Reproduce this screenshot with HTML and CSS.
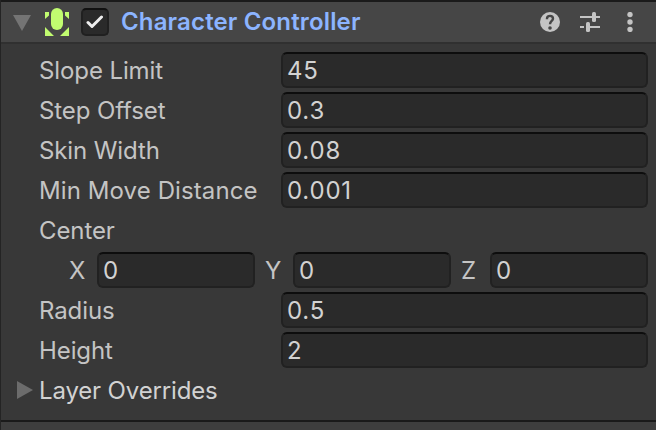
FILE: index.html
```html
<!DOCTYPE html>
<html lang="en">
<head>
<meta charset="utf-8">
<title>Character Controller</title>
<link rel="stylesheet" href="styles.css">
</head>
<body>
<main class="inspector">
  <header class="header">
    <svg class="arrow" width="18" height="16" viewBox="0 0 18 16"><path d="M0 0H18L9 16Z" fill="#747474"/></svg>
    <svg class="component" width="24" height="28" viewBox="0 0 24 28" fill="#c1fc70"><rect x="6" width="12" height="22" rx="6"/><path d="M0 4H4V7.5L0 11ZM24 4H20V7.5L24 11ZM0 19L9 28H0ZM24 19L15 28H24Z"/></svg>
    <span class="checkbox"><svg width="18" height="14" viewBox="0 0 18 14"><path d="M2 7.5L6 11.5L15.5 2" fill="none" stroke="#eee" stroke-width="3" stroke-linecap="round" stroke-linejoin="round"/></svg></span>
    <h1 class="title">Character Controller</h1>
    <span class="actions">
      <svg width="20" height="20" viewBox="0 0 20 20"><circle cx="10" cy="10" r="10" fill="#c4c4c4"/><path d="M7 7.2V6.6C7 2.9 13 2.9 13 6.7C13 9 10 9.1 10 12.3" fill="none" stroke="#464646" stroke-width="2.4"/><circle cx="10" cy="16" r="1.8" fill="#464646"/></svg>
      <svg width="20" height="20" viewBox="0 0 20 20" fill="#c4c4c4"><path d="M0 4H12V6H0ZM16 4H20V6H16ZM0 14H4V16H0ZM8 14H20V16H8Z"/><rect x="12" width="4" height="10" rx="1.5"/><rect x="6" y="10" width="4" height="10" rx="1.5"/></svg>
      <svg width="6" height="20" viewBox="0 0 6 20" fill="#c4c4c4"><circle cx="3" cy="2.6" r="2.7"/><circle cx="3" cy="10" r="2.7"/><circle cx="3" cy="17.4" r="2.7"/></svg>
    </span>
  </header>
  <section class="body">
    <div class="row"><span class="label">Slope Limit</span><span class="field">45</span></div>
    <div class="row"><span class="label">Step Offset</span><span class="field">0.3</span></div>
    <div class="row"><span class="label">Skin Width</span><span class="field">0.08</span></div>
    <div class="row"><span class="label wide">Min Move Distance</span><span class="field">0.001</span></div>
    <div class="row"><span class="label">Center</span></div>
    <div class="row vector">
      <span class="axis">X</span><span class="field">0</span>
      <span class="axis">Y</span><span class="field">0</span>
      <span class="axis">Z</span><span class="field">0</span>
    </div>
    <div class="row"><span class="label">Radius</span><span class="field">0.5</span></div>
    <div class="row"><span class="label">Height</span><span class="field">2</span></div>
    <div class="row foldout"><svg width="16" height="18" viewBox="0 0 16 18"><path d="M0 0V18L16 9Z" fill="#6c6c6c"/></svg><span class="label">Layer Overrides</span></div>
  </section>
  <footer class="next"></footer>
</main>
</body>
</html>
```
FILE: styles.css
```css
* { box-sizing: border-box; }
body {
  margin: 0;
  background: #383838;
  color: #c4c4c4;
  font-family: Inter, "Liberation Sans", sans-serif;
  font-size: 24px;
  line-height: 36px;
}
svg { display: block; flex: none; }
.inspector {
  width: 656px;
  height: 430px;
  overflow: hidden;
  border-left: 1px solid #242424;
}
.header {
  display: flex;
  align-items: center;
  height: 44px;
  padding-left: 12px;
  background: #464646;
  border-top: 2px solid #1a1a1a;
  border-bottom: 2px solid #303030;
}
.arrow { margin-top: 2px; }
.component { margin-left: 14px; }
.checkbox {
  display: flex;
  align-items: center;
  justify-content: center;
  width: 28px;
  height: 28px;
  margin-left: 12px;
  background: #2a2a2a;
  border: 2px solid #202020;
  border-top-color: #111;
  border-radius: 5px;
}
.title {
  margin: 0 0 0 12px;
  color: #8cb4ff;
  font-size: 24px;
  font-weight: 600;
  letter-spacing: 0.15px;
  white-space: nowrap;
}
.actions {
  display: flex;
  gap: 20px;
  margin-left: auto;
  padding-right: 23px;
}
.actions svg:last-child { margin-left: 7px; }
.body {
  display: grid;
  grid-auto-rows: 36px;
  row-gap: 4px;
  height: 376px;
  padding: 8px 8px 0 38px;
}
.row { display: flex; align-items: center; }
.label {
  width: 242px;
  padding-top: 2px;
  letter-spacing: -0.1px;
  white-space: nowrap;
}
.wide { letter-spacing: 0.1px; }
.axis { height: 36px; line-height: 38px; }
.field {
  flex: 1;
  height: 36px;
  padding-left: 4px;
  background: #2a2a2a;
  border: 2px solid #212121;
  border-top-color: #0d0d0d;
  border-radius: 6px;
  color: #d2d2d2;
  letter-spacing: 0.8px;
  line-height: 34px;
}
.vector {
  display: grid;
  grid-template-columns: 28px 158px 38px 158px 39px 158px;
  padding-left: 30px;
}
.axis + .field ~ .axis { padding-left: 10px; }
.foldout { margin-left: -22px; }
.foldout .label { margin-left: 6px; color: #d2d2d2; letter-spacing: -0.15px; }
.next { height: 10px; background: #3e3e3e; border-top: 2px solid #1a1a1a; }
```
